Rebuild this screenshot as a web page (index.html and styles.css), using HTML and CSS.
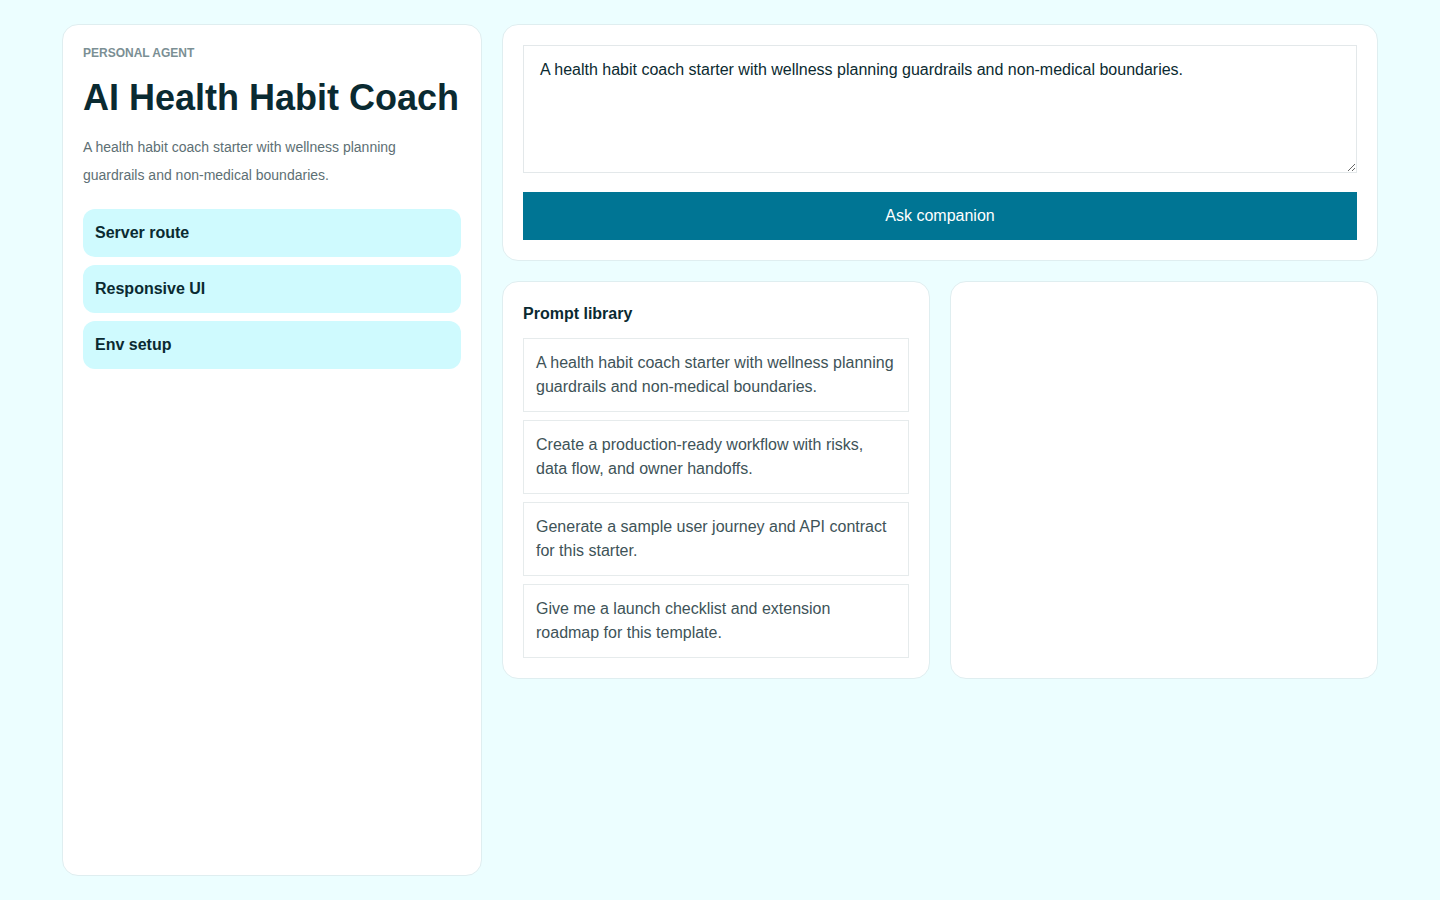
FILE: index.html
```html
<!DOCTYPE html>
<html lang="en">
<head>
<meta charset="utf-8">
<title>AI Health Habit Coach</title>
<link rel="stylesheet" href="styles.css">
</head>
<body>
<div class="shell">
  <aside class="card sidebar">
    <div class="eyebrow">PERSONAL AGENT</div>
    <h1 class="title">AI Health Habit Coach</h1>
    <p class="desc">A health habit coach starter with wellness planning guardrails and non-medical boundaries.</p>
    <nav class="nav">
      <button class="nav-item">Server route</button>
      <button class="nav-item">Responsive UI</button>
      <button class="nav-item">Env setup</button>
    </nav>
  </aside>
  <main class="main">
    <section class="card composer">
      <textarea class="input">A health habit coach starter with wellness planning guardrails and non-medical boundaries.</textarea>
      <button class="ask">Ask companion</button>
    </section>
    <div class="lower">
      <section class="card library">
        <h2 class="lib-title">Prompt library</h2>
        <div class="prompts">
          <button class="prompt">A health habit coach starter with wellness planning guardrails and non-medical boundaries.</button>
          <button class="prompt">Create a production-ready workflow with risks, data flow, and owner handoffs.</button>
          <button class="prompt">Generate a sample user journey and API contract for this starter.</button>
          <button class="prompt">Give me a launch checklist and extension roadmap for this template.</button>
        </div>
      </section>
      <section class="card output"></section>
    </div>
  </main>
</div>
</body>
</html>
```

FILE: styles.css
```css
* { box-sizing: border-box; }
html, body { margin: 0; padding: 0; }
body {
  background: #ecfeff;
  font-family: "Liberation Sans", Arial, sans-serif;
  color: #0b2a30;
}
.shell {
  width: 1316px;
  margin: 0 auto;
  padding: 24px 0;
  display: grid;
  grid-template-columns: 420px 1fr;
  gap: 20px;
  align-items: start;
}
.card {
  background: #ffffff;
  border: 1px solid #dfeef0;
  border-radius: 16px;
  padding: 20px;
}
.sidebar {
  min-height: 852px;
}
.eyebrow {
  font-size: 12px;
  font-weight: 700;
  color: #7b8f94;
  letter-spacing: 0;
  line-height: 16px;
  margin-top: 0;
}
.title {
  font-size: 36px;
  font-weight: 700;
  line-height: 44px;
  margin: 15px 0 0;
  color: #0a2a31;
}
.desc {
  font-size: 14px;
  line-height: 28px;
  color: #5d6f74;
  margin: 13px 0 0;
}
.nav {
  display: flex;
  flex-direction: column;
  gap: 8px;
  margin-top: 20px;
}
.nav-item {
  height: 48px;
  border: 0;
  border-radius: 12px;
  background: #cffafe;
  text-align: left;
  padding: 0 12px;
  font-family: inherit;
  font-size: 16px;
  font-weight: 700;
  color: #0a2a31;
}
.main {
  display: flex;
  flex-direction: column;
  gap: 20px;
}
.composer {
  display: flex;
  flex-direction: column;
  gap: 19px;
}
.input {
  height: 128px;
  resize: vertical;
  border: 1px solid #e3e8ea;
  border-radius: 0;
  padding: 13px 16px 11px;
  font-family: inherit;
  font-size: 16px;
  line-height: 22px;
  color: #0b2a30;
  outline: none;
}
.ask {
  height: 48px;
  border: 0;
  background: #007594;
  color: #ffffff;
  font-family: inherit;
  font-size: 16px;
}
.lower {
  display: grid;
  grid-template-columns: 1fr 1fr;
  gap: 20px;
}
.lib-title {
  margin: 0 0 12px;
  font-size: 16px;
  line-height: 24px;
  font-weight: 700;
  color: #0a2a31;
}
.prompts {
  display: flex;
  flex-direction: column;
  gap: 8px;
}
.prompt {
  border: 1px solid #e6ebec;
  background: #ffffff;
  padding: 12px;
  text-align: left;
  font-family: inherit;
  font-size: 16px;
  line-height: 24px;
  color: #3e5358;
}
```
